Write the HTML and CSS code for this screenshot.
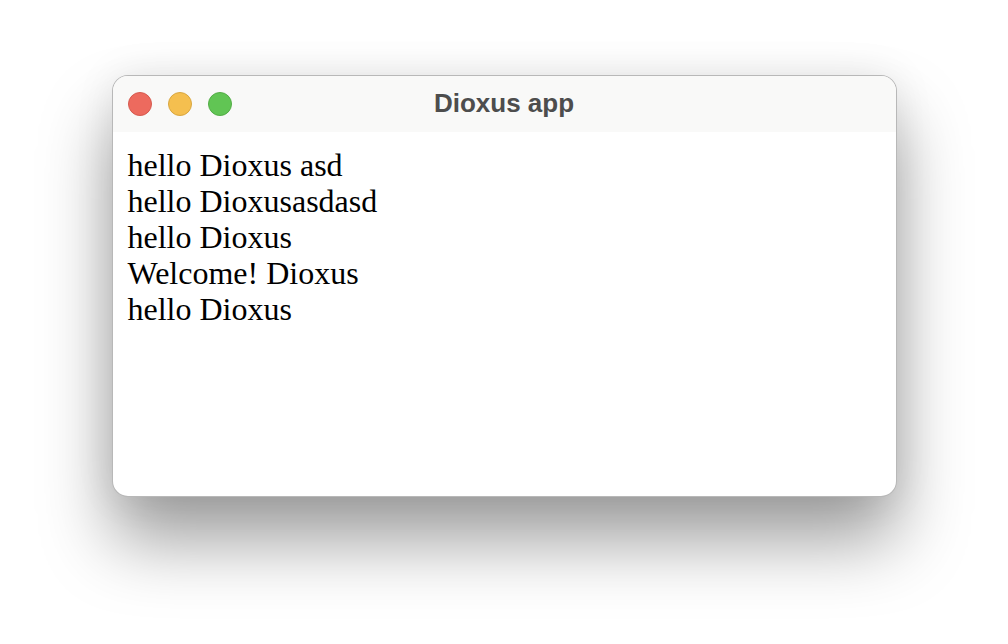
FILE: index.html
```html
<!DOCTYPE html>
<html>
<head>
<meta charset="utf-8">
<link rel="stylesheet" href="styles.css">
</head>
<body>
<div class="stage">
  <div class="window">
    <div class="titlebar">
      <div class="lights">
        <span class="light red"></span>
        <span class="light yellow"></span>
        <span class="light green"></span>
      </div>
      <div class="title">Dioxus app</div>
    </div>
    <div class="content">
      <div>hello Dioxus asd</div>
      <div>hello Dioxusasdasd</div>
      <div>hello Dioxus</div>
      <div>Welcome! Dioxus</div>
      <div>hello Dioxus</div>
    </div>
  </div>
</div>
</body>
</html>
```

FILE: styles.css
```css
html, body {
  margin: 0;
  padding: 0;
  background: #ffffff;
  width: 1008px;
  height: 644px;
  overflow: hidden;
}
.stage {
  display: flex;
  justify-content: center;
  padding-top: 75px;
}
.window {
  width: 785px;
  height: 422px;
  box-sizing: border-box;
  border-radius: 16px;
  background: #ffffff;
  border: 1px solid rgba(0, 0, 0, 0.28);
  box-shadow: 0 44px 70px rgba(0, 0, 0, 0.38), 0 0 40px rgba(0, 0, 0, 0.08);
  overflow: hidden;
  display: flex;
  flex-direction: column;
}
.titlebar {
  position: relative;
  height: 56px;
  background: #f9f9f8;
  display: flex;
  align-items: center;
  justify-content: center;
  flex-shrink: 0;
}
.lights {
  position: absolute;
  left: 15px;
  top: 16px;
  display: flex;
  gap: 16px;
}
.light {
  width: 24px;
  height: 24px;
  border-radius: 50%;
  box-sizing: border-box;
}
.red { background: #ed6a5e; border: 1px solid #d65a4f; }
.yellow { background: #f5bf4f; border: 1px solid #d9a740; }
.green { background: #61c554; border: 1px solid #53ad46; }
.title {
  font-family: "Liberation Sans", Arial, sans-serif;
  font-weight: bold;
  font-size: 26px;
  color: #4d4d4d;
  margin-top: -1px;
}
.content {
  padding: 15px 15px;
  font-family: "Liberation Serif", "Times New Roman", serif;
  font-size: 32px;
  line-height: 36px;
  color: #000;
}
```
